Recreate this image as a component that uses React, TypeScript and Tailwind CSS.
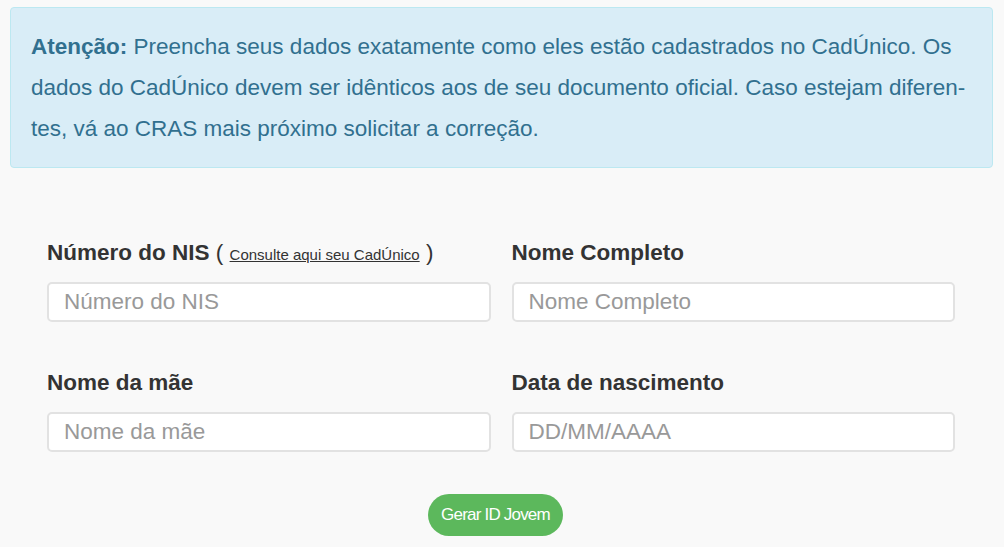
import React from "react";

function Field({
  label,
  placeholder,
  extra,
}: {
  label: string;
  placeholder: string;
  extra?: React.ReactNode;
}) {
  return (
    <div className="flex flex-col">
      <label className="h-[28px] text-[22.5px] leading-[28px] font-bold text-[#333333] mb-[15px] whitespace-nowrap">
        {label}
        {extra}
      </label>
      <input
        type="text"
        placeholder={placeholder}
        className="h-[40px] w-full rounded-[5px] border-2 border-[#e2e2e2] bg-white px-[15px] text-[22.5px] text-[#555555] placeholder:text-[#999999] outline-none"
      />
    </div>
  );
}

export default function App() {
  return (
    <div className="min-h-[547px] bg-[#f9f9f9] pt-[7px] font-['Liberation_Sans',Arial,sans-serif]">
      {/* Alert */}
      <div className="ml-[10px] w-[983px] rounded-[4px] border border-[#bce8f1] bg-[#d9edf7] px-[20px] py-[18px] text-[22.5px] leading-[41px] text-[#31708f]">
        <strong>Atenção:</strong> Preencha seus dados exatamente como eles estão cadastrados no CadÚnico. Os
        <br />
        dados do CadÚnico devem ser idênticos aos de seu documento oficial. Caso estejam diferen-
        <br />
        tes, vá ao CRAS mais próximo solicitar a correção.
      </div>

      {/* Form */}
      <form className="ml-[47px] mt-[71px] w-[908px]">
        <div className="grid grid-cols-2 gap-x-[21px] gap-y-[47px]">
          <Field
            label="Número do NIS"
            placeholder="Número do NIS"
            extra={
              <span className="font-normal">
                {" "}
                ({" "}
                <a href="#" className="text-[15px] leading-none underline text-[#333333]">
                  Consulte aqui seu CadÚnico
                </a>{" "}
                )
              </span>
            }
          />
          <Field label="Nome Completo" placeholder="Nome Completo" />
          <Field label="Nome da mãe" placeholder="Nome da mãe" />
          <Field label="Data de nascimento" placeholder="DD/MM/AAAA" />
        </div>

        <div className="mt-[42px] flex justify-center pr-[11px]">
          <button
            type="button"
            className="h-[42px] rounded-full bg-[#5cb85c] px-[13px] text-[17px] tracking-[-0.8px] text-white"
          >
            Gerar ID Jovem
          </button>
        </div>
      </form>
    </div>
  );
}
